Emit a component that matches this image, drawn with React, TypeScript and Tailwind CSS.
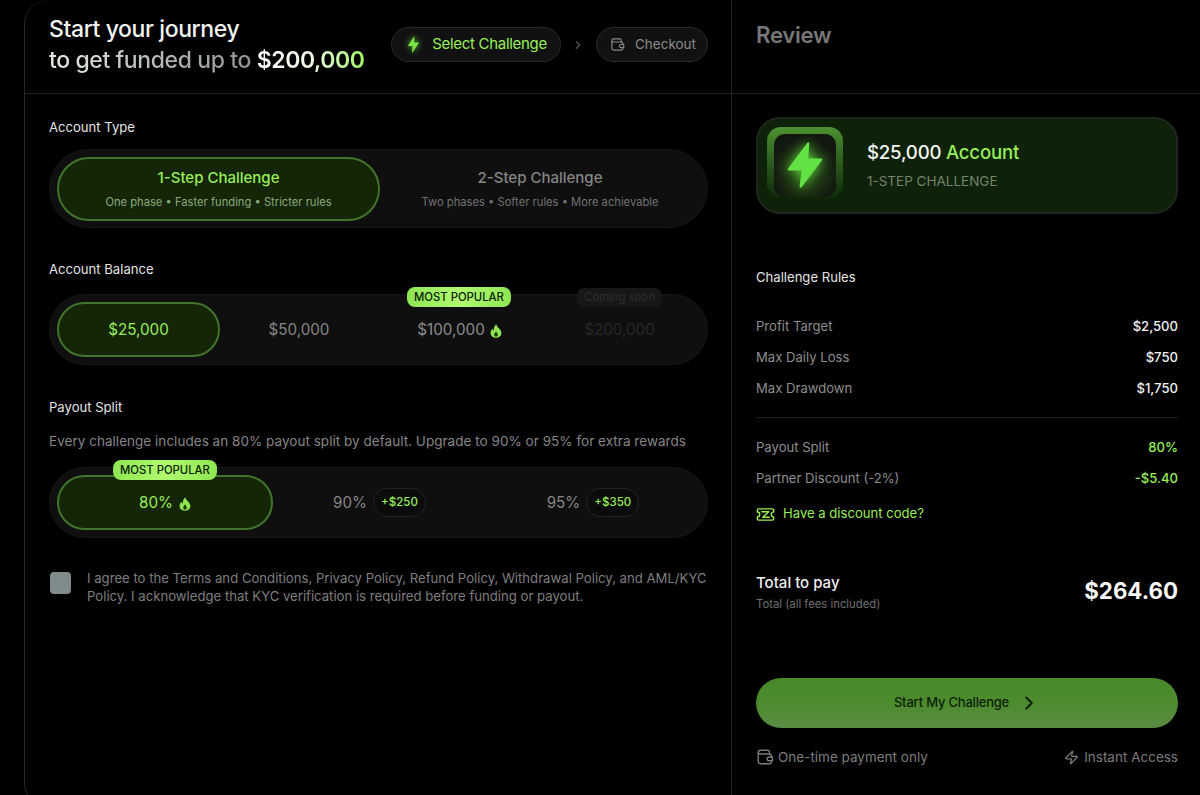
import React from "react";
import { ChevronRight, Zap } from "lucide-react";

function WalletIcon({ className }: { className: string }) {
  return (
    <svg viewBox="0 0 24 24" fill="none" stroke="currentColor" strokeWidth="1.8" strokeLinecap="round" strokeLinejoin="round" className={className}>
      <path d="M18 8V5.500A2.500 2.500 0 0 0 15.500 3H6a3 3 0 0 0-3 3v12a3 3 0 0 0 3 3h12a2.500 2.500 0 0 0 2.500-2.500V17" />
      <path d="M3 6.500A2.500 2.500 0 0 0 5.500 8H18a2.500 2.500 0 0 1 2.500 2.500V12" />
      <path d="M17.500 12H22v5h-4.500a2.500 2.500 0 0 1 0-5Z" />
    </svg>
  );
}

function TicketIcon({ className }: { className: string }) {
  return (
    <svg viewBox="0 0 20 16" fill="none" stroke="currentColor" strokeWidth="1.5" strokeLinecap="round" strokeLinejoin="round" className={className}>
      <path d="M2.500 2h15a1.200 1.200 0 0 1 1.200 1.200v2.200a2.600 2.600 0 0 0 0 5.200v2.200a1.200 1.200 0 0 1-1.200 1.200h-15a1.200 1.200 0 0 1-1.200-1.200v-2.200a2.600 2.600 0 0 0 0-5.200V3.200A1.200 1.200 0 0 1 2.500 2Z" />
      <path d="M6 5h7.500L7 11h7" />
    </svg>
  );
}

function FlameIcon({ className }: { className: string }) {
  return (
    <svg viewBox="0 0 12 14" className={className}>
      <path d="M6.300 0.300C6.700 2.400 8 3.300 9.300 4.800C10.600 6.300 11.400 7.600 11.400 9C11.400 11.900 9 13.800 6 13.800C3 13.800 0.600 11.900 0.600 9C0.600 7.200 1.500 5.800 2.500 4.800C2.700 5.800 3.100 6.400 3.800 6.800C3.600 4.200 4.500 1.800 6.300 0.300Z" fill="#8fe552" />
      <path d="M6 7.300C6.300 8.300 7.800 9.200 7.800 10.700C7.800 11.900 7 12.600 6 12.600C5 12.600 4.200 11.900 4.200 10.700C4.200 9.300 5.500 8.500 6 7.300Z" fill="#1c3a10" />
    </svg>
  );
}

function Popular({ className }: { className: string }) {
  return (
    <span className={`absolute flex h-[20px] w-[104px] items-center justify-center rounded-[8px] bg-gradient-to-r from-[#8fe552] via-[#b0fb70] to-[#8fe552] text-[11.300px] font-medium whitespace-nowrap text-[#0a2205] ${className}`}>
      MOST POPULAR
    </span>
  );
}

function Rule({ label, value, green }: { label: string; value: string; green?: boolean }) {
  return (
    <div className="flex h-[31px] items-center justify-between text-[13.100px]">
      <span className="text-[#8d8d8d]">{label}</span>
      <span className={green ? "font-medium text-[#97ee58]" : "font-medium text-[#f2f2f2]"}>{value}</span>
    </div>
  );
}

export default function App() {
  return (
    <div className="flex h-[795px] w-[1200px] overflow-hidden bg-black pl-[24px] text-white [font-family:Inter,'Liberation_Sans',sans-serif]">
      <main className="h-[807px] w-[707px] shrink-0 rounded-tl-[24px] rounded-bl-[24px] border-l border-[#262626]">
        <header className="flex h-[94px] items-center justify-between border-b border-[#232323] pr-[23px] pl-[24px]">
          <h1 className="mb-[4px] text-[23px] leading-[31px] font-medium tracking-[-0.4px] whitespace-nowrap">
            <div className="text-[#f1f3ef]">Start your journey</div>
            <div>
              <span className="bg-gradient-to-r from-[#e5ece2] to-[#8f9290] bg-clip-text text-transparent">to get funded up to</span>{" "}
              <span className="bg-gradient-to-r from-white via-[#eef7e6] to-[#9df75b] bg-clip-text font-semibold text-transparent">$200,000</span>
            </div>
          </h1>
          <nav className="mb-[4px] flex items-center whitespace-nowrap">
            <div className="flex h-[35px] items-center gap-[11px] rounded-full border border-[#2a2a2a] bg-[#111111] pr-[13px] pl-[14px] text-[15px] tracking-[-0.3px] text-[#97ee58]">
              <svg viewBox="0 0 24 24" className="h-[19px] w-[15px] drop-shadow-[0_0_3px_#5fd43c]" preserveAspectRatio="none">
                <path d="M13.500 1 L3 14 H10.500 L9.500 23 L21 9.500 H13 Z" fill="#7ee644" />
              </svg>
              Select Challenge
            </div>
            <ChevronRight className="mx-[10.500px] h-[14px] w-[14px] text-[#555555]" />
            <div className="flex h-[35px] items-center gap-[10px] rounded-full border border-[#2a2a2a] bg-[#111111] pr-[11px] pl-[13px] text-[13.500px] text-[#8a8a8a]">
              <WalletIcon className="h-[15px] w-[15px]" />
              Checkout
            </div>
          </nav>
        </header>

        <div className="pt-[23px] pr-[23px] pl-[24px]">
          <h2 className="h-[20px] text-[13.100px] leading-[20px] text-[#e4e4e4]">Account Type</h2>
          <div className="mt-[12px] flex h-[79px] items-center rounded-full border border-[#161616] bg-[#0f0f0f] p-[7px]">
            <div className="flex h-[64px] w-[323px] shrink-0 flex-col items-center justify-center gap-[6px] rounded-full border-2 border-[#41752a] bg-[#142508]">
              <div className="text-[15px] leading-[20px] font-medium text-[#97ee58]">1-Step Challenge</div>
              <div className="text-[11.200px] leading-[16px] text-[#8aa97c]">One phase • Faster funding • Stricter rules</div>
            </div>
            <div className="flex h-[64px] flex-1 flex-col items-center justify-center gap-[6px]">
              <div className="text-[15px] leading-[20px] font-medium text-[#858585]">2-Step Challenge</div>
              <div className="text-[11.200px] leading-[16px] text-[#727272]">Two phases • Softer rules • More achievable</div>
            </div>
          </div>

          <h2 className="mt-[31px] h-[20px] text-[13.100px] leading-[20px] text-[#e4e4e4]">Account Balance</h2>
          <div className="relative mt-[15px] flex h-[71px] items-center rounded-full border border-[#161616] bg-[#0f0f0f] p-[7px] text-[15.200px]">
            <div className="flex h-[55px] w-[163px] shrink-0 items-center justify-center rounded-full border-2 border-[#41752a] bg-[#142508] pt-[2px] text-[#97ee58]">$25,000</div>
            <div className="flex h-[55px] w-[158px] shrink-0 items-center justify-center pt-[2px] text-[#858585]">$50,000</div>
            <div className="relative flex h-[55px] w-[163px] shrink-0 items-center justify-center gap-[5px] pt-[2px] text-[#8c8c8c]">
              <Popular className="-top-[15px] left-[29px]" />
              $100,000
              <FlameIcon className="h-[14px] w-[12px]" />
            </div>
            <div className="relative flex h-[55px] flex-1 items-center justify-center pt-[2px] pr-[2px] text-[#272727]">
              <span className="absolute -top-[14px] left-[36px] flex h-[19px] w-[85px] items-center justify-center rounded-[7px] bg-[#171717] text-[11.300px] whitespace-nowrap text-[#2f2f2f]">Coming soon</span>
              $200,000
            </div>
          </div>

          <h2 className="mt-[32px] h-[20px] text-[13.100px] leading-[20px] text-[#e4e4e4]">Payout Split</h2>
          <p className="mt-[14px] h-[20px] text-[13.500px] leading-[20px] tracking-[0.03px] whitespace-nowrap text-[#858585]">Every challenge includes an 80% payout split by default. Upgrade to 90% or 95% for extra rewards</p>
          <div className="relative mt-[16px] flex h-[71px] items-center rounded-full border border-[#161616] bg-[#0f0f0f] p-[7px] text-[15.200px]">
            <div className="relative flex h-[55px] w-[216px] shrink-0 items-center justify-center gap-[6px] rounded-full border-2 border-[#41752a] bg-[#142508] pt-[2px] text-[#97ee58]">
              <Popular className="-top-[17px] left-[54px]" />
              80%
              <FlameIcon className="h-[14px] w-[12px]" />
            </div>
            <div className="flex h-[55px] w-[213px] shrink-0 items-center justify-center gap-[6px] text-[#858585]">
              <span className="pt-[2px]">90%</span>
              <span className="flex h-[29px] w-[53px] items-center justify-center rounded-full border border-[#232323] bg-[#0b0b0b] text-[11.500px] font-medium text-[#97ee58]">+$250</span>
            </div>
            <div className="flex h-[55px] flex-1 items-center justify-center gap-[6px] text-[#858585]">
              <span className="pt-[2px]">95%</span>
              <span className="flex h-[29px] w-[53px] items-center justify-center rounded-full border border-[#232323] bg-[#0b0b0b] text-[11.500px] font-medium text-[#97ee58]">+$350</span>
            </div>
          </div>

          <div className="mt-[30px] flex items-start">
            <div className="mt-[4px] ml-[1px] h-[22px] w-[21px] shrink-0 rounded-[4px] bg-[#7f8a8b]" />
            <p className="mt-[1px] ml-[16px] w-[626px] shrink-0 text-[13.150px] leading-[18px] text-[#7e7e7e]">I agree to the Terms and Conditions, Privacy Policy, Refund Policy, Withdrawal Policy, and AML/KYC Policy. I acknowledge that KYC verification is required before funding or payout.</p>
          </div>
        </div>
      </main>

      <aside className="flex h-[795px] flex-1 flex-col border-l border-[#232323]">
        <div className="flex h-[94px] shrink-0 items-start border-b border-[#232323] pt-[19px] pl-[24px]">
          <h2 className="text-[22.200px] leading-[32px] font-semibold tracking-[-0.3px] text-[#777777]">Review</h2>
        </div>
        <div className="flex flex-1 flex-col pt-[23px] pr-[22px] pl-[24px]">
          <div className="flex h-[97px] shrink-0 items-center gap-[24px] rounded-[24px] border-2 border-[#20261f] bg-[#0e2109] pl-[9px]">
            <div className="mb-[7px] h-[71px] w-[76px] rounded-[14px] bg-gradient-to-b from-[#4d9131] to-[#0f2a0c] px-[7px] pt-[7px] pb-[1px]">
              <div className="flex h-full w-full items-center justify-center rounded-[11px] bg-[radial-gradient(circle_at_50%_60%,#2a5518_0%,#12170f_70%)]">
                <svg viewBox="0 0 24 24" className="h-[52px] w-[52px] drop-shadow-[0_0_6px_#5fd43c]">
                  <path d="M13.500 2 L4.500 14 H11 L10 22 L19.500 9.500 H13 Z" fill="#62e245" strokeLinejoin="round" stroke="#62e245" strokeWidth="1" />
                </svg>
              </div>
            </div>
            <div className="mb-[2px]">
              <div className="text-[18.600px] leading-[26px] font-medium tracking-[-0.2px] whitespace-nowrap text-[#f4f6f2]">$25,000 <span className="text-[#97ee58]">Account</span></div>
              <div className="mt-[7px] text-[13.500px] leading-[18px] text-[#73836d]">1-STEP CHALLENGE</div>
            </div>
          </div>

          <h3 className="mt-[53px] h-[20px] text-[13.100px] leading-[20px] text-[#e4e4e4]">Challenge Rules</h3>
          <div className="mt-[24px]">
            <Rule label="Profit Target" value="$2,500" />
            <Rule label="Max Daily Loss" value="$750" />
            <Rule label="Max Drawdown" value="$1,750" />
          </div>
          <div className="mt-[13px] mb-[14px] h-px bg-[#1e1e1e]" />
          <Rule label="Payout Split" value="80%" green />
          <Rule label="Partner Discount (-2%)" value="-$5.40" green />
          <div className="mt-[4px] flex h-[32px] items-center gap-[8px] text-[13.100px] text-[#97ee58]">
            <TicketIcon className="h-[15px] w-[19px]" />
            Have a discount code?
          </div>

          <div className="mt-[42px] flex items-center justify-between">
            <div>
              <div className="text-[15px] leading-[22px] font-medium text-[#eeeeee]">Total to pay</div>
              <div className="mt-[2px] text-[11.300px] leading-[16px] text-[#6f6f6f]">Total (all fees included)</div>
            </div>
            <div className="mb-[2px] text-[22.300px] leading-[32px] font-bold text-[#f7f7f7]">$264.60</div>
          </div>

          <div className="mt-[66px] flex h-[50px] shrink-0 items-center justify-center gap-[9px] rounded-full bg-gradient-to-b from-[#48892a] via-[#4b8c2c] to-[#5c8b45] text-[13px] font-medium tracking-[-0.2px] text-[#0d1f0a]">
            Start My Challenge
            <ChevronRight className="h-[22px] w-[22px]" strokeWidth={2.200} />
          </div>

          <div className="mt-[19px] flex items-center justify-between text-[13.500px] text-[#7c7c7c]">
            <span className="flex items-center gap-[4px]">
              <WalletIcon className="h-[18px] w-[18px]" />
              One-time payment only
            </span>
            <span className="flex items-center gap-[5px]">
              <Zap className="h-[15px] w-[15px]" />
              Instant Access
            </span>
          </div>
        </div>
      </aside>
    </div>
  );
}
